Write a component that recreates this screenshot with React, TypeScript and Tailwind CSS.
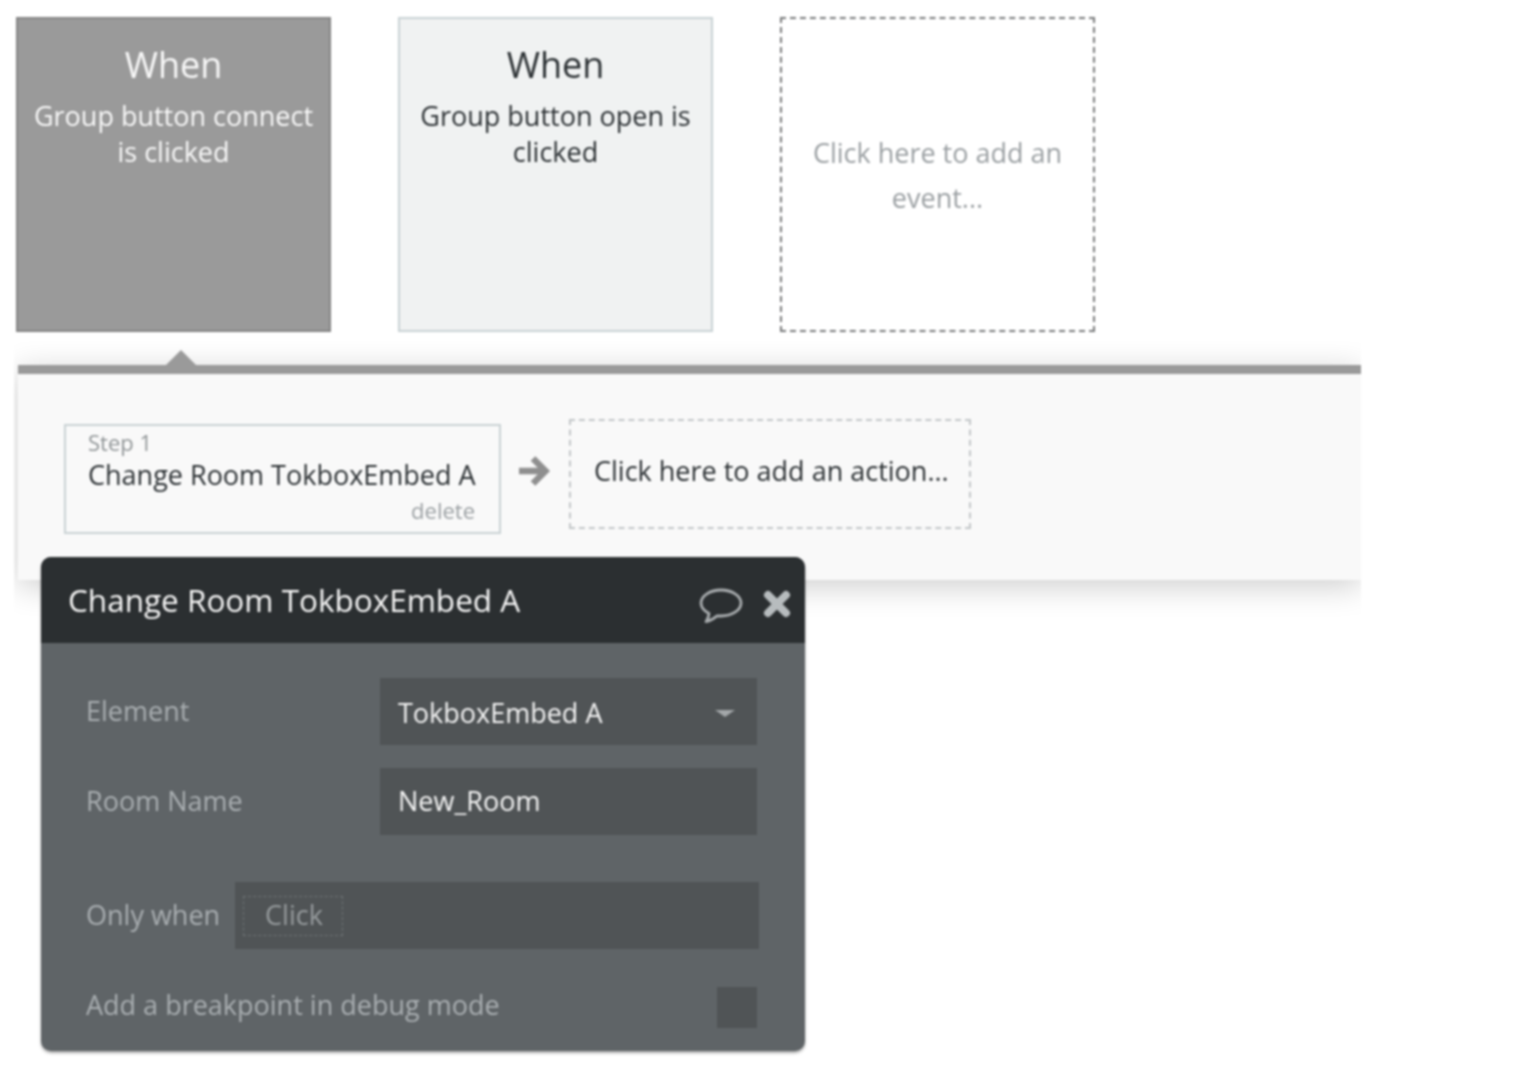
import React from "react";

const font = { fontFamily: '"Open Sans", sans-serif' };

function Card({ variant, line }: { variant: "dark" | "light"; line: string }) {
  const cls =
    variant === "dark"
      ? "bg-[#9a9a9a] border-[#848484] text-[#f8f8f8]"
      : "bg-[#f0f2f2] border-[#c9d2d4] text-[#2b3033]";
  return (
    <div className={`w-[315px] h-[315px] border-2 ${cls} flex flex-col items-center px-[14px] pt-[21px] text-center`}>
      <div className="text-[36px] leading-[50px]">When</div>
      <div className="text-[27px] leading-[36px] mt-[8px]">{line}</div>
    </div>
  );
}

function Field({ label, value, caret }: { label: string; value: string; caret?: boolean }) {
  return (
    <div className="flex items-center h-[67px]">
      <div className="w-[294px] text-[27px] text-[#a9aeb1]">{label}</div>
      <div className={`w-[377px] h-full bg-[#505456] flex items-center justify-between pl-[18px] pr-[22px] text-[27px] text-[#f4f4f4] ${caret ? "pt-[4px]" : ""}`}>
        <span>{value}</span>
        {caret && <span className="w-0 h-0 border-x-[10px] border-x-transparent border-t-[7px] border-t-[#a3a7a9]" />}
      </div>
    </div>
  );
}

export default function App() {
  return (
    <div style={font} className="w-[1530px] h-[1076px] bg-white overflow-hidden blur-[0.8px]">
      <div className="flex gap-[67px] pl-[16px] pt-[17px]">
        <Card variant="dark" line="Group button connect is clicked" />
        <Card variant="light" line="Group button open is clicked" />
        <div className="w-[315px] h-[315px] border-2 border-dashed border-[#77797a] flex items-center justify-center px-[20px] text-center text-[27px] leading-[45px] text-[#9a9fa2]">
          Click here to add an event...
        </div>
      </div>

      <div className="relative ml-[18px] mt-[33px] w-[1343px] h-[215px] bg-[#f9f9f9] border-t-[9px] border-[#9a9a9a] shadow-[0_6px_30px_rgba(0,0,0,0.2)] [clip-path:inset(-24px_0_-60px_-4px)]">
        <span className="absolute left-[147px] top-[-24px] w-0 h-0 border-x-[16px] border-x-transparent border-b-[16px] border-b-[#9a9a9a]" />
        <div className="flex items-start pl-[46px] pt-[45px]">
          <div className="mt-[5px] w-[437px] h-[110px] border-2 border-[#c9d2d4] pl-[22px] pr-[24px] flex flex-col">
            <div className="text-[22px] leading-[24px] mt-[4px] text-[#8f9496]">Step 1</div>
            <div className="text-[27px] leading-[36px] mt-[3px] whitespace-nowrap text-[#2b3033]">Change Room TokboxEmbed A</div>
            <div className="text-[22px] leading-[24px] mt-[5px] text-right text-[#9a9fa2]">delete</div>
          </div>
          <svg viewBox="0 0 32 32" className="ml-[17px] mt-[36px] w-[32px] h-[32px]" fill="none" stroke="#8f8f8f" strokeWidth="6.5">
            <path d="M1 16H26" />
            <path d="M15 3.5 27.5 16 15 28.5" />
          </svg>
          <div className="ml-[19px] w-[402px] h-[110px] border-2 border-dashed border-[#c2c6c8] pl-[23px] pt-[30px] text-[27px] leading-[40px] whitespace-nowrap text-[#2b3033]">
            Click here to add an action...
          </div>
        </div>
      </div>

      <div className="relative z-10 ml-[41px] -mt-[23px] w-[764px] h-[494px] rounded-[10px] overflow-hidden bg-[#5f6467] shadow-[0_2px_3px_rgba(0,0,0,0.35)]">
        <div className="h-[86px] bg-[#2b2f31] flex items-center pl-[27px] pr-[14px]">
          <span className="text-[31.5px] text-[#f6f6f6] flex-1 -mt-[1px]">Change Room TokboxEmbed A</span>
          <svg viewBox="0 0 44 38" className="w-[44px] h-[38px] mr-[20px] mt-[11px]" fill="none" stroke="#a9adaf" strokeWidth="2.8" strokeLinejoin="round">
            <path d="M22 3C11 3 2 8.8 2 16c0 4.4 3.3 8 8 10.4-.3 3.2-1.4 6-3 8.3 4.2-.8 8-3 11.2-5.9 1.2.2 2.5.2 3.8.2 11 0 20-5.8 20-13S33 3 22 3Z" />
          </svg>
          <svg viewBox="0 0 28 28" className="w-[28px] h-[28px] mt-[7px]" fill="none" stroke="#b7bcbe" strokeWidth="8" strokeLinecap="round">
            <path d="M5 5 23 23M23 5 5 23" />
          </svg>
        </div>
        <div className="pl-[45px] pt-[35px]">
          <Field label="Element" value="TokboxEmbed A" caret />
          <div className="h-[23px]" />
          <Field label="Room Name" value="New_Room" />
          <div className="flex items-center h-[67px] mt-[47px]">
            <div className="w-[149px] text-[27px] text-[#a9aeb1]">Only when</div>
            <div className="w-[524px] h-full bg-[#505456] flex items-center pl-[8px]">
              <div className="w-[100px] h-[40px] border border-dashed border-[#6e7375] flex items-center justify-center pl-[2px] text-[27px] text-[#969b9d]">Click</div>
            </div>
          </div>
          <div className="flex items-center justify-between h-[41px] mt-[38px] w-[671px]">
            <div className="text-[27px] text-[#a9aeb1] -mt-[4px]">Add a breakpoint in debug mode</div>
            <div className="w-[40px] h-[41px] bg-[#505456]" />
          </div>
        </div>
      </div>
    </div>
  );
}
